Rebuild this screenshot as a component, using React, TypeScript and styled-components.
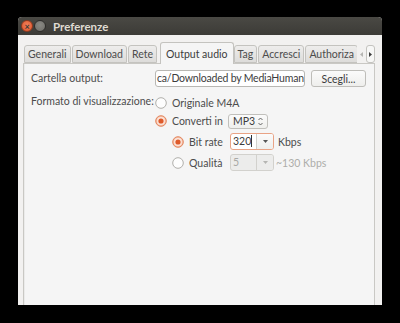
import React from "react";
import styled, { createGlobalStyle } from "styled-components";

const Global = createGlobalStyle`
  html, body { margin: 0; padding: 0; background: #000; }
  body { font-family: Lato, "Noto Sans", sans-serif; }
`;

const Screen = styled.div`
  width: 400px;
  height: 323px;
  background: #000;
  padding: 17px 18px 0 18px;
  box-sizing: border-box;
`;

const Window = styled.div`
  width: 364px;
  height: 288px;
  display: flex;
  flex-direction: column;
  background: #f2f1f0;
  border-radius: 4px 4px 0 0;
  overflow: hidden;
`;

const TitleBar = styled.div`
  height: 18px;
  flex: none;
  display: flex;
  align-items: center;
  padding-left: 3px;
  gap: 1px;
  background: linear-gradient(#4a4944, #3c3b37);
`;

const WinButton = styled.div<{ $color: string; $edge: string }>`
  width: 10px;
  height: 10px;
  border-radius: 50%;
  background: ${(p) => p.$color};
  border: 1px solid ${(p) => p.$edge};
  display: flex;
  align-items: center;
  justify-content: center;
  color: #3c3b37;
  font-size: 9px;
  line-height: 1;
  font-weight: bold;
`;

const Title = styled.div`
  margin-left: 6px;
  color: #dfdbd2;
  font-size: 11.5px;
  font-weight: bold;
`;

const Body = styled.div`
  flex: 1;
  display: flex;
  flex-direction: column;
  padding: 7px 6px 0 5px;
`;

const TabBar = styled.div`
  display: flex;
  align-items: flex-end;
  height: 21px;
  padding-left: 1px;
  position: relative;
  z-index: 1;
`;

const Tabs = styled.div`
  flex: 1;
  min-width: 0;
  display: flex;
  align-items: flex-end;
  height: 22px;
  margin-bottom: -1px;
  overflow: hidden;
`;

const Tab = styled.div<{ $active?: boolean }>`
  flex: none;
  height: ${(p) => (p.$active ? 22 : 18)}px;
  box-sizing: border-box;
  padding: 0 ${(p) => (p.$active ? 5 : 3)}px;
  display: flex;
  align-items: center;
  font-size: 10.5px;
  color: ${(p) => (p.$active ? "#3c3c3c" : "#4c4c4c")};
  border: 1px solid #c4c3bf;
  border-bottom: ${(p) => (p.$active ? "none" : "1px solid #c4c3bf")};
  border-radius: 3px 3px 0 0;
  margin-right: ${(p) => (p.$active ? 0 : 1)}px;
  margin-left: ${(p) => (p.$active ? 2 : 0)}px;
  margin-bottom: ${(p) => (p.$active ? 0 : 1)}px;
  background: ${(p) =>
    p.$active ? "#f5f5f5" : "linear-gradient(#eeedec, #dddcda)"};
  white-space: nowrap;
`;

const Arrows = styled.div`
  flex: none;
  display: flex;
  align-items: center;
  height: 18px;
  margin-left: 1px;
  margin-right: 1px;
  gap: 1px;
`;

const ArrowBtn = styled.div<{ $boxed?: boolean }>`
  width: ${(p) => (p.$boxed ? 9 : 7)}px;
  height: 18px;
  box-sizing: border-box;
  display: flex;
  align-items: center;
  justify-content: center;
  border: ${(p) => (p.$boxed ? "1px solid #c4c3bf" : "none")};
  border-radius: 3px;
  background: ${(p) => (p.$boxed ? "#f7f7f6" : "transparent")};
`;

const Panel = styled.div`
  flex: 1;
  background: #f5f5f5;
  border: 1px solid #c9c8c4;
  border-bottom: none;
  margin-right: 1px;
  padding: 6px 7px 0 7px;
  box-shadow: inset 1px 0 0 #ebebea;
`;

const Grid = styled.div`
  display: grid;
  grid-template-columns: 124px 1fr;
  align-items: center;
`;

const Label = styled.div<{ $top?: number }>`
  font-size: 10.5px;
  color: #4c4c4c;
  white-space: nowrap;
  height: 17px;
  line-height: 17px;
  align-self: ${(p) => (p.$top !== undefined ? "start" : "center")};
  margin-top: ${(p) => p.$top ?? 0}px;
`;

const FieldRow = styled.div`
  display: flex;
  align-items: center;
  gap: 6px;
`;

const Entry = styled.div`
  width: 150px;
  height: 17px;
  box-sizing: border-box;
  border: 1px solid #b8b7b3;
  border-radius: 3px;
  background: #fff;
  font-size: 10.5px;
  letter-spacing: -0.2px;
  color: #3c3c3c;
  line-height: 15px;
  padding-left: 1px;
  overflow: hidden;
  white-space: nowrap;
`;

const Button = styled.div`
  width: 55px;
  height: 17px;
  box-sizing: border-box;
  border: 1px solid #bebdb9;
  border-radius: 3px;
  background: linear-gradient(#fbfbfb, #eeeeec);
  font-size: 10.5px;
  color: #3c3c3c;
  display: flex;
  align-items: center;
  justify-content: center;
`;

const Options = styled.div`
  display: flex;
  flex-direction: column;
  padding-top: 7px;
`;

const OptionRow = styled.div<{ $indent?: number; $h: number }>`
  display: flex;
  align-items: center;
  height: ${(p) => p.$h}px;
  padding-left: ${(p) => p.$indent ?? 0}px;
  font-size: 10.5px;
  color: #4c4c4c;
  white-space: nowrap;
`;

const OptionText = styled.span<{ $w?: number }>`
  ${(p) => (p.$w ? `width: ${p.$w}px;` : "")}
  flex: none;
`;

const RadioWrap = styled.svg`
  width: 12px;
  height: 12px;
  margin-right: 5px;
  flex: none;
`;

const Radio = ({ checked }: { checked?: boolean }) => (
  <RadioWrap viewBox="0 0 12 12">
    {checked ? (
      <>
        <circle cx="6" cy="6" r="5.3" fill="#f6c3ad" stroke="#e07a4e" strokeWidth="0.9" />
        <circle cx="6" cy="6" r="3.9" fill="#fbe6dc" />
        <circle cx="6" cy="6" r="2.6" fill="#de5a2a" />
      </>
    ) : (
      <circle cx="6" cy="6" r="5.3" fill="#fdfdfd" stroke="#a8a7a3" strokeWidth="0.9" />
    )}
  </RadioWrap>
);

const Combo = styled.div<{ $w: number }>`
  width: ${(p) => p.$w}px;
  height: 15px;
  box-sizing: border-box;
  border: 1px solid #c1c0bc;
  border-radius: 3px;
  background: linear-gradient(#fbfbfb, #efefed);
  display: flex;
  align-items: center;
  justify-content: space-between;
  padding: 0 4px 0 4px;
  font-size: 10.5px;
  color: #3c3c3c;
`;

const SpinIcon = styled.svg`
  width: 5px;
  height: 9px;
`;

const ComboEntry = styled.div<{ $disabled?: boolean; $focus?: boolean }>`
  display: flex;
  height: 17px;
  box-sizing: border-box;
  border: 1px solid ${(p) => (p.$focus ? "#e9a385" : "#d2d1cd")};
  border-radius: 3px;
  overflow: hidden;
  background: ${(p) => (p.$disabled ? "#ececeb" : "#fff")};
`;

const ComboText = styled.div<{ $disabled?: boolean }>`
  width: 23px;
  font-size: 10.5px;
  line-height: 15px;
  padding-left: 2px;
  color: ${(p) => (p.$disabled ? "#a9a9a6" : "#3c3c3c")};
  border-right: 1px solid #d2d1cd;
`;

const Caret = styled.span`
  display: inline-block;
  width: 1px;
  height: 12px;
  background: #333;
  vertical-align: -2px;
`;

const DropBtn = styled.div<{ $disabled?: boolean }>`
  width: 16px;
  display: flex;
  align-items: center;
  justify-content: center;
  background: ${(p) => (p.$disabled ? "#ececeb" : "linear-gradient(#fbfbfb, #efefed)")};
`;

const Suffix = styled.span<{ $disabled?: boolean }>`
  margin-left: ${(p) => (p.$disabled ? 2 : 4)}px;
  color: ${(p) => (p.$disabled ? "#adadaa" : "#4c4c4c")};
`;

const DownTri = ({ color }: { color: string }) => (
  <svg width="5" height="3" viewBox="0 0 5 3">
    <path d="M0 0 L5 0 L2.5 3 Z" fill={color} />
  </svg>
);

const SideTri = ({ color, left }: { color: string; left?: boolean }) => (
  <svg width="3" height="5" viewBox="0 0 3 5">
    <path d={left ? "M3 0 L3 5 L0 2.5 Z" : "M0 0 L0 5 L3 2.5 Z"} fill={color} />
  </svg>
);

export default function App() {
  return (
    <>
      <Global />
      <Screen>
        <Window>
          <TitleBar>
            <WinButton $color="radial-gradient(circle at 50% 40%, #f37f59, #d9542b)" $edge="#8f3a1f">
              ×
            </WinButton>
            <WinButton $color="radial-gradient(circle at 50% 40%, #8a8983, #6e6d68)" $edge="#2f2e2b" />
            <Title>Preferenze</Title>
          </TitleBar>
          <Body>
            <TabBar>
              <Tabs>
                <Tab>Generali</Tab>
                <Tab>Download</Tab>
                <Tab>Rete</Tab>
                <Tab $active>Output audio</Tab>
                <Tab>Tag</Tab>
                <Tab>Accresci</Tab>
                <Tab>Authoriza</Tab>
              </Tabs>
              <Arrows>
                <ArrowBtn>
                  <SideTri color="#b5b5b2" left />
                </ArrowBtn>
                <ArrowBtn $boxed>
                  <SideTri color="#3c3c3c" />
                </ArrowBtn>
              </Arrows>
            </TabBar>
            <Panel>
              <Grid>
                <Label>Cartella output:</Label>
                <FieldRow>
                  <Entry>ca/Downloaded by MediaHuman</Entry>
                  <Button>Scegli...</Button>
                </FieldRow>
                <Label $top={6}>Formato di visualizzazione:</Label>
                <Options>
                  <OptionRow $h={17}>
                    <Radio />
                    <OptionText>Originale M4A</OptionText>
                  </OptionRow>
                  <OptionRow $h={20}>
                    <Radio checked />
                    <OptionText $w={56}>Converti in</OptionText>
                    <Combo $w={40}>
                      MP3
                      <SpinIcon viewBox="0 0 5 9">
                        <path d="M0.5 3 L2.5 1 L4.5 3" fill="none" stroke="#555" strokeWidth="0.9" />
                        <path d="M0.5 6 L2.5 8 L4.5 6" fill="none" stroke="#555" strokeWidth="0.9" />
                      </SpinIcon>
                    </Combo>
                  </OptionRow>
                  <OptionRow $indent={17} $h={21}>
                    <Radio checked />
                    <OptionText $w={41}>Bit rate</OptionText>
                    <ComboEntry $focus>
                      <ComboText>
                        320<Caret />
                      </ComboText>
                      <DropBtn>
                        <DownTri color="#555" />
                      </DropBtn>
                    </ComboEntry>
                    <Suffix>Kbps</Suffix>
                  </OptionRow>
                  <OptionRow $indent={17} $h={21}>
                    <Radio />
                    <OptionText $w={41}>Qualità</OptionText>
                    <ComboEntry $disabled>
                      <ComboText $disabled>5</ComboText>
                      <DropBtn $disabled>
                        <DownTri color="#b5b5b2" />
                      </DropBtn>
                    </ComboEntry>
                    <Suffix $disabled>~130 Kbps</Suffix>
                  </OptionRow>
                </Options>
              </Grid>
            </Panel>
          </Body>
        </Window>
      </Screen>
    </>
  );
}
